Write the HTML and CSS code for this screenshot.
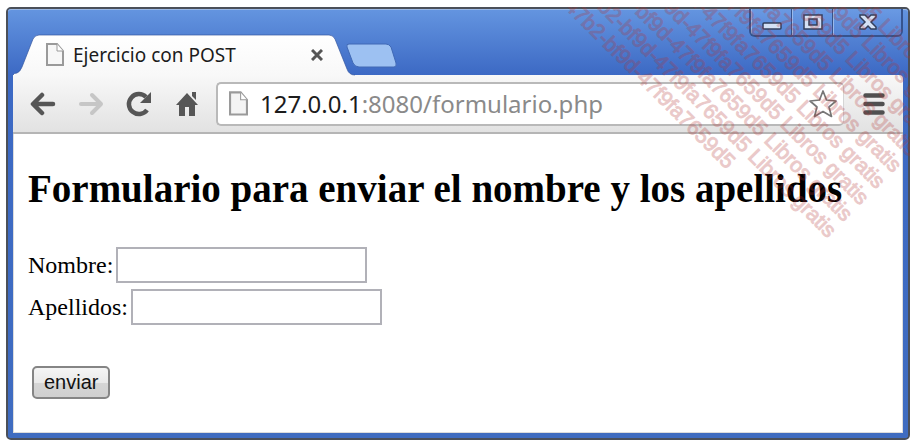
FILE: index.html
```
<!DOCTYPE html>
<html lang="es">

<head>
    <meta charset="UTF-8">
    <meta name="viewport" content="width=device-width, initial-scale=1.0">
    <title>Ejercicio con POST</title>
    <link rel="stylesheet" href="styles.css">
</head>

<body>
    <div class="window">
        <div class="frame">
            <header class="titlebar">
                <div class="tab">
                    <svg class="tab-shape" viewBox="0 0 342 40" preserveAspectRatio="none" aria-hidden="true">
                        <defs>
                            <linearGradient id="tabFill" x1="0" y1="0" x2="0" y2="1">
                                <stop offset="0" stop-color="#ffffff" />
                                <stop offset="1" stop-color="#f8f8f8" />
                            </linearGradient>
                        </defs>
                        <path d="M0 40Q1 38 4 38Q7 37 9 32L20 4Q22 0 26 0H316Q320 0 322 4L334 34Q336 40 342 40Z" fill="url(#tabFill)" />
                        <path d="M0 40Q1 38 4 38Q7 37 9 32L20 4Q22 0 26 0H316Q320 0 322 4L334 34Q336 40 342 40" fill="none" stroke="#34579f" stroke-opacity=".7" />
                    </svg>
                    <svg class="page-icon" width="18" height="24" viewBox="0 0 18 24" aria-hidden="true">
                        <path d="M1 1H11L17 8V22H1Z" fill="#f7f7f7" stroke="#9a9a9a" stroke-width="2" />
                        <path d="M11 1V8H17" fill="#fff" stroke="#9a9a9a" />
                    </svg>
                    <span class="tab-title">Ejercicio con POST</span>
                    <button type="button" class="tab-close" aria-label="Cerrar">
                        <svg width="12" height="12" viewBox="0 0 12 12"><path d="M1 1L11 11M11 1L1 11" stroke="#555" stroke-width="3" /></svg>
                    </button>
                </div>
                <button type="button" class="new-tab" aria-label="Nueva">
                    <svg width="52" height="26" viewBox="0 0 52 26">
                        <path d="M3 1H40Q43 1 45 4L50 20Q51 24 48 24H13Q9 24 7 20L1 4Q0 1 3 1Z" fill="#9dc1f2" stroke="#4069b5" />
                    </svg>
                </button>
                <div class="controls">
                    <button type="button" class="control" aria-label="Minimizar">
                        <svg class="minimize" width="20" height="8" viewBox="0 0 20 8"><rect x="1" y="1" width="18" height="6" rx="1" fill="#d3e0f5" stroke="#333f5c" stroke-width="1.5" /></svg>
                    </button>
                    <button type="button" class="control" aria-label="Maximizar">
                        <svg width="20" height="16" viewBox="0 0 20 16"><path d="M1 1H19V15H1ZM6 5V11H14V5Z" fill="#d3e0f5" fill-rule="evenodd" stroke="#333f5c" stroke-width="1.5" /></svg>
                    </button>
                    <button type="button" class="control control-close" aria-label="Cerrar ventana">
                        <svg width="18" height="16" viewBox="0 0 18 16"><path d="M1 1H6L9 4L12 1H17V3L12 8L17 13V15H12L9 12L6 15H1V13L6 8L1 3Z" fill="#d3e0f5" stroke="#333f5c" stroke-width="1.5" /></svg>
                    </button>
                </div>
            </header>

            <nav class="toolbar">
                <button type="button" class="nav-btn" aria-label="Atrás">
                    <svg width="26" height="24" viewBox="0 0 26 24"><path d="M23 12H4M12 3L3 12L12 21" fill="none" stroke="#565656" stroke-width="4.5" stroke-linecap="round" stroke-linejoin="round" /></svg>
                </button>
                <button type="button" class="nav-btn" aria-label="Adelante">
                    <svg width="26" height="24" viewBox="0 0 26 24"><path d="M3 12H22M14 3L23 12L14 21" fill="none" stroke="#c6c6c6" stroke-width="4" stroke-linecap="round" stroke-linejoin="round" /></svg>
                </button>
                <button type="button" class="nav-btn" aria-label="Recargar">
                    <svg width="26" height="26" viewBox="0 0 26 26">
                        <path d="M21 19A10 10 0 1 1 20 6" fill="none" stroke="#565656" stroke-width="4.5" />
                        <path d="M25 1V12H14Z" fill="#565656" />
                    </svg>
                </button>
                <button type="button" class="nav-btn" aria-label="Inicio">
                    <svg width="24" height="26" viewBox="0 0 24 26">
                        <path d="M12 2L1 14H4V25H10V16H14V25H20V14H23Z" fill="#565656" />
                        <path d="M17 1H21V9L17 5Z" fill="#565656" />
                    </svg>
                </button>
                <div class="omnibox">
                    <svg class="page-icon" width="19" height="26" viewBox="0 0 18 24" aria-hidden="true">
                        <path d="M1 1H11L17 8V22H1Z" fill="#f4f4f4" stroke="#9a9a9a" stroke-width="2" />
                        <path d="M11 1V8H17" fill="#fff" stroke="#9a9a9a" />
                    </svg>
                    <div class="url" role="textbox" contenteditable="true" spellcheck="false" aria-label="Dirección"><span class="host">127.0.0.1</span>:8080/formulario.php</div>
                    <button type="button" class="star" aria-label="Favorito">
                        <svg width="30" height="30" viewBox="0 0 30 30"><path d="M15 2L18.500 11L28 12L21 18L23.500 27.500L15 22.500L6.500 27.500L9 18L2 12L11.500 11Z" fill="#fff" stroke="#777" stroke-width="1.700" stroke-linejoin="round" /></svg>
                    </button>
                </div>
                <button type="button" class="menu-btn" aria-label="Menú">
                    <svg width="22" height="22" viewBox="0 0 22 22"><path d="M2.500 2.500H19.500M2.500 11H19.500M2.500 19.500H19.500" stroke="#505050" stroke-width="4.5" stroke-linecap="round" /></svg>
                </button>
            </nav>

            <main class="page">
                <h1>Formulario para enviar el nombre y los apellidos</h1>
                <form method="post" action="formulario.php">
                    <div class="form-row">
                        <label for="nombre">Nombre:</label>
                        <input type="text" id="nombre" name="nombre">
                    </div>
                    <div class="form-row">
                        <label for="apellidos">Apellidos:</label>
                        <input type="text" id="apellidos" name="apellidos">
                    </div>
                    <button type="submit" class="submit-btn">enviar</button>
                </form>
            </main>
        </div>

        <div class="watermark" aria-hidden="true">
            <div class="watermark-text">
                47b2-bf9d-47f9fa7659d5 Libros gratis<br>
                47b2-bf9d-47f9fa7659d5 Libros gratis<br>
                47b2-bf9d-47f9fa7659d5 Libros gratis<br>
                47b2-bf9d-47f9fa7659d5 Libros gratis<br>
                47b2-bf9d-47f9fa7659d5 Libros gratis<br>
                47b2-bf9d-47f9fa7659d5 Libros gratis<br>
                47b2-bf9d-47f9fa7659d5 Libros gratis<br>
                47b2-bf9d-47f9fa7659d5 Libros gratis<br>
                47b2-bf9d-47f9fa7659d5 Libros gratis<br>
                47b2-bf9d-47f9fa7659d5
            </div>
        </div>
    </div>
</body>

</html>
```
FILE: styles.css
```
* {
    box-sizing: border-box;
}

body {
    margin: 0;
    padding: 7px 8px 6px 6px;
    background-color: white;
    font-family: "Liberation Serif", serif;
}

button {
    padding: 0;
    border: none;
    background: none;
    cursor: pointer;
}

svg {
    display: block;
    flex: none;
}

/* Browser window */
.window {
    position: relative;
    border: 2px solid #4b5059;
    border-radius: 5px;
    background-color: #3f6cc0;
}

.frame {
    padding: 0 5px 5px;
    border-radius: 3px;
    background: linear-gradient(#6495e0, #3c69c4 66px, #3f6cc0);
    box-shadow: inset 0 1px #9ab8e6;
}

.titlebar {
    display: flex;
    align-items: flex-end;
    height: 66px;
}

.tab {
    position: relative;
    display: flex;
    align-items: center;
    width: 342px;
    height: 40px;
    padding: 0 32px 0 33px;
    gap: 9px;
}

.tab-shape {
    position: absolute;
    left: 0;
    top: 0;
    width: 100%;
    height: 100%;
    overflow: visible;
}

.page-icon {
    position: relative;
}

.tab-title {
    position: relative;
    flex: 1;
    font-family: "Noto Sans", sans-serif;
    font-size: 19px;
    white-space: nowrap;
    color: #1c1c1c;
}

.tab-close {
    position: relative;
}

.new-tab {
    margin: 0 0 6px -9px;
    align-self: flex-end;
}

.controls {
    display: flex;
    align-self: flex-start;
    margin-left: auto;
    border: 2px solid #35538e;
    border-top: none;
    border-radius: 0 0 6px 6px;
    overflow: hidden;
}

.control {
    display: flex;
    justify-content: center;
    align-items: center;
    width: 41px;
    height: 26px;
    border-left: 1px solid #9bb9ea;
    background: linear-gradient(#6a9ae3, #5685d6);
}

.control + .control {
    box-shadow: -1px 0 #35538e;
}

.control-close {
    width: 68px;
}

.minimize {
    margin-top: 8px;
}

.toolbar {
    display: flex;
    align-items: center;
    height: 59px;
    padding: 0 18px 0 6px;
    border-bottom: 2px solid #b5b5b5;
    border-radius: 0 4px 0 0;
    background: linear-gradient(#f8f8f8, #e2e2e2);
}

.nav-btn {
    display: flex;
    justify-content: center;
    width: 48px;
}

.omnibox {
    display: flex;
    flex: 1;
    align-items: center;
    height: 44px;
    margin: 0 19px 0 5px;
    padding: 0 5px 0 11px;
    gap: 12px;
    border: 2px solid #b9b9b9;
    border-right: 1px solid #d5d5d5;
    border-radius: 5px;
    background-color: white;
}

.url {
    flex: 1;
    font-family: "Noto Sans", sans-serif;
    font-size: 24px;
    line-height: 36px;
    white-space: nowrap;
    color: #8a8a8a;
    outline: none;
}

.host {
    color: #1c1c1c;
}

/* Page content */
.page {
    padding: 32px 14px 33px;
    border: 1px solid #dcdcdc;
    border-top: none;
    background-color: white;
}

.page h1 {
    margin: 0 0 35px;
    font-size: 39px;
    line-height: 46px;
    white-space: nowrap;
    color: black;
}

.form-row {
    display: flex;
    align-items: center;
    gap: 3px;
    margin-bottom: 6px;
    font-size: 24px;
}

.form-row input {
    width: 251px;
    height: 36px;
    padding: 2px 4px;
    border: 2px solid #b1b1b8;
    font-size: 20px;
}

.submit-btn {
    height: 33px;
    margin: 35px 0 0 4px;
    padding: 0 10px;
    border: 2px solid #858585;
    border-radius: 5px;
    background: linear-gradient(#f5f5f5, #e9e9e9 50%, #d5d5d5 51%, #d0d0d0);
    font-family: "Liberation Sans", sans-serif;
    font-size: 20px;
    color: #111;
}

/* Diagonal watermark over the window */
.watermark {
    position: absolute;
    inset: -2px;
    overflow: hidden;
    pointer-events: none;
}

.watermark-text {
    position: absolute;
    right: -5px;
    bottom: calc(100% - 3px);
    width: 354px;
    font-family: "Liberation Sans", sans-serif;
    font-size: 21px;
    line-height: 23px;
    white-space: nowrap;
    color: rgb(178, 50, 50);
    -webkit-text-stroke: 1px rgb(178, 50, 50);
    opacity: 0.26;
    transform: rotate(45deg);
    transform-origin: 0 100%;
}
```
